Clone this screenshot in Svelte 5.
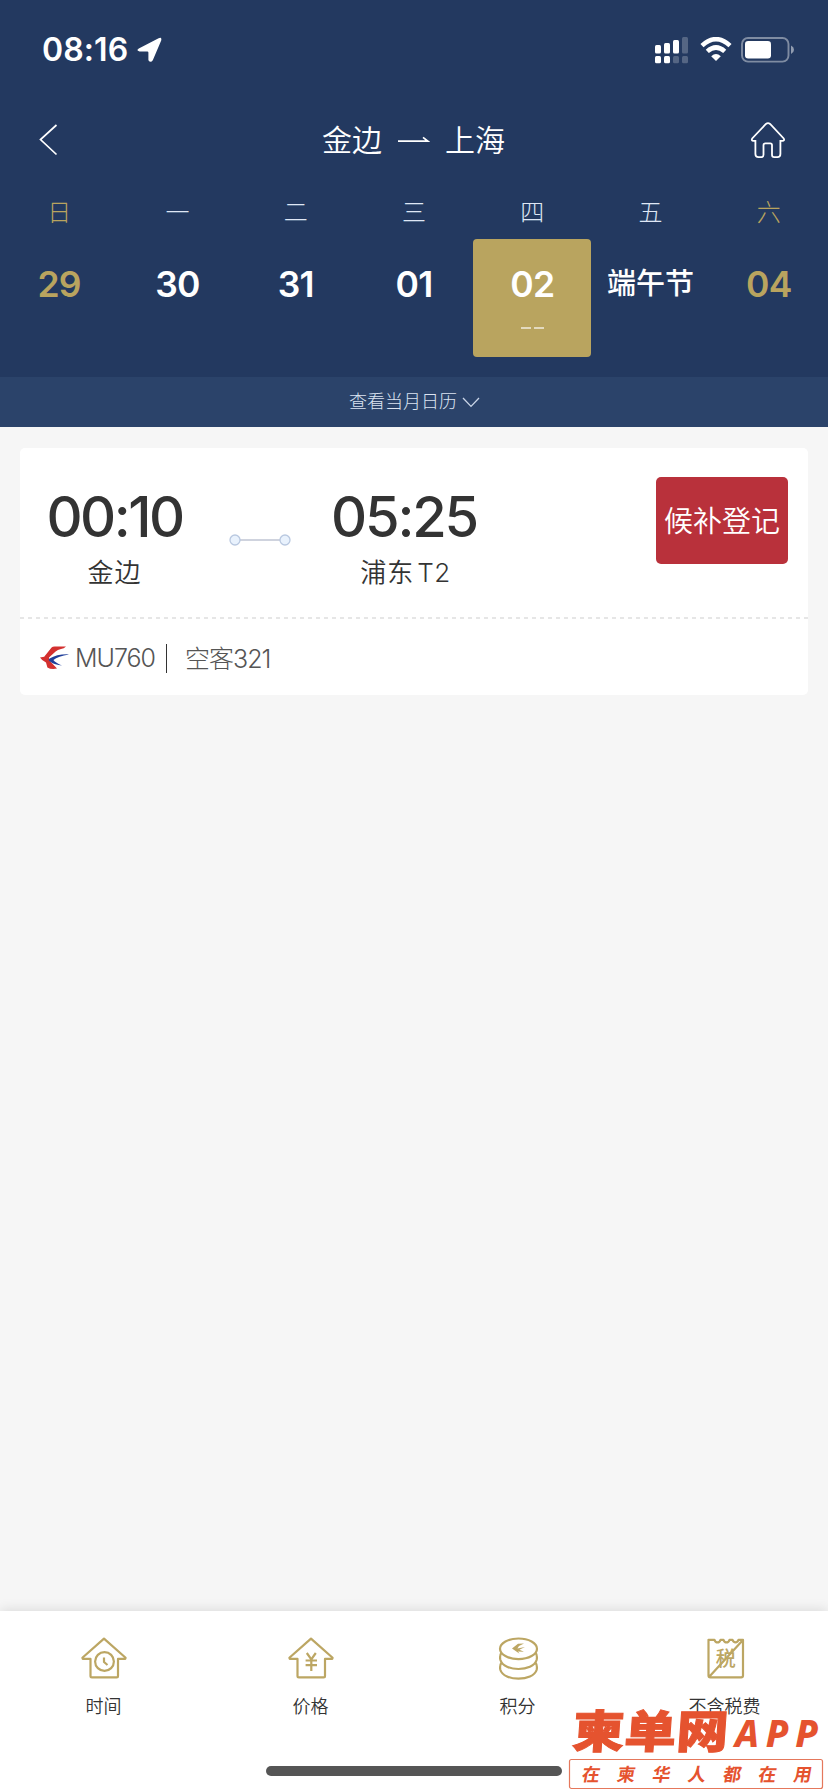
<script>
    let selected = 4;

    const days = [
        { week: "日", date: "29", weekend: true },
        { week: "一", date: "30" },
        { week: "二", date: "31" },
        { week: "三", date: "01" },
        { week: "四", date: "02" },
        { week: "五", date: "端午节", festival: true },
        { week: "六", date: "04", weekend: true }
    ];

    const tabs = [
        { icon: "time", label: "时间" },
        { icon: "price", label: "价格" },
        { icon: "points", label: "积分" },
        { icon: "tax", label: "不含税费" }
    ];
</script>

<div class="page">
    <header>
        <div class="status-bar">
            <span class="clock">08:16</span>
            <svg class="location" width="26" height="26" viewBox="0 0 26 26">
                <path d="M1.8 11.4 21.6 1.3Q25 -.2 24.2 3.4L15.8 23.2Q13.6 26.4 11.4 23.2V15.4Q11.3 14.4 10.4 14.4H2.6Q-1.4 13.6 1.8 11.4Z" fill="#fff" />
            </svg>
            <svg class="signal" width="34" height="28" viewBox="0 0 34 28" fill="#fff">
                <rect x="0" y="8" width="6" height="8.4" rx="1.5" />
                <rect x="9" y="6" width="6" height="10.4" rx="1.5" />
                <rect x="18" y="3" width="6" height="13.4" rx="1.5" />
                <rect x="27" y="0" width="6" height="16.4" rx="1.5" opacity=".23" />
                <rect x="0" y="19" width="6" height="7.2" rx="1.5" />
                <rect x="9" y="19" width="6" height="7.2" rx="1.5" />
                <rect x="18" y="19" width="6" height="7.2" rx="1.5" opacity=".23" />
                <rect x="27" y="19" width="6" height="7.2" rx="1.5" opacity=".23" />
            </svg>
            <svg class="wifi" width="32" height="24" viewBox="0 0 32 24">
                <path d="M2 8.6Q16-4.2 30 8.6M7.3 14.4Q16 6.6 24.7 14.4" fill="none" stroke="#fff" stroke-width="4.6" />
                <path d="M11.2 19.2Q16 15 20.8 19.2L16 24Z" fill="#fff" />
            </svg>
            <svg class="battery" width="54" height="26" viewBox="0 0 54 26">
                <rect x="1" y="1" width="46.5" height="23.6" rx="6" fill="none" stroke="#fff" stroke-opacity=".42" stroke-width="1.9" />
                <rect x="4" y="4" width="26" height="17.4" rx="3.2" fill="#fff" />
                <path d="M50 8.6Q53 10 53 12.8T50 17Z" fill="#fff" opacity=".5" />
            </svg>
        </div>

        <nav>
            <svg class="back" width="20" height="32" viewBox="0 0 20 32">
                <path d="M17.5 1 1.5 15.5 17.5 30.5" fill="none" stroke="#fff" stroke-width="1.7" />
            </svg>
            <h1>
                <span>金边</span>
                <svg width="32" height="8" viewBox="0 0 32 8">
                    <path d="M0 5.2H30L25 1.4" fill="none" stroke="#fff" stroke-width="1.7" />
                </svg>
                <span>上海</span>
            </h1>
            <svg class="home" width="36" height="37" viewBox="0 0 36 37">
                <path d="M15.9 2Q18 .4 20.1 2L33.5 16.2Q35.2 18.6 32.2 18.9H30.4V32Q30.4 35.2 27.4 35.2H24.2Q22 35.2 22 32.8V23Q22 21.4 20.3 21.4H15.4Q13.5 21.4 13.5 23V32.8Q13.5 35.2 11.3 35.2H8.6Q5.4 35.2 5.4 32V18.9H3.6Q.8 18.6 2.4 16.2Z" fill="none" stroke="#fff" stroke-width="1.8" />
            </svg>
        </nav>

        <div class="calendar">
            {#each days as day, i}
                <div class="day" class:weekend={day.weekend}>
                    <span class="week">{day.week}</span>
                    <button class="date" class:selected={i === selected} class:festival={day.festival}>
                        <span>{day.date}</span>
                        {#if i === selected}
                            <small><i></i><i></i></small>
                        {/if}
                    </button>
                </div>
            {/each}
        </div>

        <div class="month">
            <span>查看当月日历</span>
            <svg width="18" height="11" viewBox="0 0 18 11">
                <path d="M1 1 9 9.4 17 1" fill="none" stroke="#cbd6e8" stroke-width="1.3" />
            </svg>
        </div>
    </header>

    <main>
        <div class="card">
            <div class="flight">
                <div class="stop from">
                    <strong>00:10</strong>
                    <span>金边</span>
                </div>
                <svg class="route" width="62" height="12" viewBox="0 0 62 12">
                    <path d="M11 6H51" stroke="#cfd3de" stroke-width="2" />
                    <circle cx="6" cy="6" r="5" fill="#e9f2fd" stroke="#b9c8e0" stroke-width="1.3" />
                    <circle cx="56" cy="6" r="5" fill="#e9f2fd" stroke="#b9c8e0" stroke-width="1.3" />
                </svg>
                <div class="stop to">
                    <strong>05:25</strong>
                    <span>浦东<em>T2</em></span>
                </div>
                <button class="waitlist">候补登记</button>
            </div>
            <svg class="dashes" width="788" height="2" viewBox="0 0 788 2">
                <path d="M0 1H788" stroke="#dedede" stroke-width="1.6" stroke-dasharray="4 4" />
            </svg>
            <div class="plane">
                <svg width="30" height="24" viewBox="0 0 30 24">
                    <path d="M0 11.6 4.2 10.8 11.6 1.6Q12.6 .4 14.6 .4H26Q24 2.4 21 3 17.6 3.8 15.6 5.4L9 11.4Q8.6 13.6 10.8 16L17 22.6Q11 23.8 7.4 21.4L6 16.4Q2 15 0 11.6Z" fill="#d3302f" />
                    <path d="M29 8.4Q17 8 9.6 12.6 7.6 14 10 15.6 15 19.4 22 19.4 15.6 17 13.4 14 18 10.2 29 8.4Z" fill="#203f9a" />
                </svg>
                <span class="number">MU760</span>
                <span class="model">空客321</span>
            </div>
        </div>
    </main>

    <footer>
        <div class="tabs">
            {#each tabs as tab}
                <div class="tab">
                    <svg width="48" height="44" viewBox="0 0 48 44" fill="none" stroke="#bca663" stroke-width="2.2" stroke-linejoin="round">
                        {#if tab.icon === "time" || tab.icon === "price"}
                            <path d="M24 2.6 45.6 21.8 45.2 22.9H38V40Q38 41.4 36.6 41.4H11.9Q10.5 41.4 10.5 40V22.9H2.8L2.4 21.8Z" />
                        {/if}
                        {#if tab.icon === "time"}
                            <circle cx="24.5" cy="25.5" r="9.4" fill="#fff" />
                            <path d="M24 21.5V26L27.5 29" />
                        {:else if tab.icon === "price"}
                            <path d="M19.8 17 24.3 23.4 28.8 17M24.3 23V35M18.6 24.5H30M18.6 29.2H30" />
                        {:else if tab.icon === "points"}
                            <ellipse cx="24.5" cy="12.8" rx="18.5" ry="10.3" />
                            <path d="M7.3 17Q5.4 19.6 6.4 24C10 36 39 36 42.6 24Q43.6 19.6 41.7 17M7.3 27Q5.4 29.6 6.4 34C10 45.6 39 45.6 42.6 34Q43.6 29.6 41.7 27" />
                            <path d="M18 12.4 24 7.8 30 7.4 25 10 23.4 12.4 31 11 25.4 13.8 30 15.8 24 15.6 25.6 17.8Z" fill="#bca663" stroke="none" />
                        {:else}
                            <path d="M7.5 3.8V39.6Q7.5 41.4 9.3 41.4H40.2Q42 41.4 42 39.6V3.8H37.5Q36.8 6.4 34.5 6.4T31.5 3.8H28.5Q27.6 6.4 25.5 6.4T22.5 3.8H19.5Q18.6 6.4 16.5 6.4T13.5 3.8ZM8 41 41.5 4.4" />
                            <text x="24.8" y="29.8" text-anchor="middle" class="tax">税</text>
                        {/if}
                    </svg>
                    <span>{tab.label}</span>
                </div>
            {/each}
        </div>
        <div class="indicator"></div>
    </footer>

    <svg class="watermark" width="264" height="92" viewBox="0 0 264 92" fill="#e5532f">
        <g transform="translate(7.5 47.5) skewX(-4) scale(1.09 .95)">
            <text class="brand" x="0" y="0" textLength="143">柬单网</text>
        </g>
        <text class="app" x="171" y="46.5" textLength="83">APP</text>
        <rect x="5.5" y="59.5" width="253" height="29" rx="2" fill="#fff" stroke="#e5785c" stroke-width="1.2" />
        <g transform="translate(17 80.5) skewX(-10)">
            {#each "在柬华人都在用" as char, i}
                <text class="slogan" x={i * 35.3}>{char}</text>
            {/each}
        </g>
    </svg>
</div>

<style>
    :global(body) {
        margin: 0;
        background: #f6f6f6;
    }

    .page {
        position: relative;
        display: flex;
        flex-direction: column;
        width: 828px;
        height: 1792px;
        overflow: hidden;
        font-family: Inter, "Noto Sans CJK SC", sans-serif;
        color: #333;
        background: #f6f6f6;
    }

    svg {
        display: block;
        flex: none;
    }

    button {
        border: none;
        padding: 0;
        font-family: inherit;
        color: inherit;
        background: none;
    }

    header {
        height: 427px;
        color: #fff;
        background: #233960;
    }

    .status-bar {
        display: flex;
        height: 100px;
        box-sizing: border-box;
        padding: 37px 33px 0 42px;
    }

    .clock {
        width: 95px;
        line-height: 26px;
        font-size: 32px;
        font-weight: 600;
        letter-spacing: 0.1px;
    }

    .signal {
        margin-left: auto;
    }

    .wifi {
        margin-left: 11px;
    }

    .battery {
        margin-left: 9px;
    }

    nav {
        display: grid;
        grid-template-columns: 1fr auto 1fr;
        align-items: center;
        height: 80px;
        padding: 0 42px 0 39px;
    }

    .home {
        justify-self: end;
    }

    h1 {
        display: flex;
        align-items: center;
        margin: 0 0 0 2px;
        line-height: 40px;
        font-size: 30px;
        font-weight: 350;
    }

    h1 svg {
        margin: 0 15px 0 16px;
    }

    .calendar {
        display: grid;
        grid-template-columns: repeat(7, 1fr);
        height: 197px;
    }

    .day {
        display: flex;
        flex-direction: column;
        align-items: center;
    }

    .week {
        height: 59px;
        line-height: 65px;
        font-size: 24px;
        font-weight: 300;
        color: #dfe7f5;
    }

    .weekend,
    .weekend .week {
        color: #b9a45f;
    }

    .date {
        display: flex;
        flex-direction: column;
        align-items: center;
        width: 118px;
        height: 118px;
        line-height: 91px;
        font-size: 35.5px;
        font-weight: 600;
        letter-spacing: -0.8px;
        border-radius: 4px;
    }

    .selected {
        background: #b9a45f;
    }

    .festival {
        font-size: 29px;
        font-weight: 500;
        letter-spacing: 0;
        line-height: 90px;
    }

    .date small {
        display: flex;
        gap: 3px;
        margin-top: -3px;
    }

    .date i {
        width: 10px;
        height: 2px;
        background: #e3dabf;
    }

    .month {
        display: flex;
        justify-content: center;
        align-items: center;
        gap: 5px;
        height: 50px;
        padding-left: 1px;
        font-size: 18px;
        line-height: 48px;
        font-weight: 300;
        color: #dbe4f2;
        background: #2b436a;
    }

    main {
        flex: 1;
        padding: 20px;
    }

    .card {
        margin-top: 1px;
        height: 247px;
        border-radius: 5px;
        background: #fff;
    }

    .flight {
        display: flex;
        height: 169px;
        box-sizing: border-box;
        padding: 29px 20px 0 17px;
    }

    .stop {
        display: flex;
        flex-direction: column;
        align-items: center;
        width: 155px;
    }

    .stop strong {
        line-height: 80px;
        font-size: 56px;
        font-weight: 500;
        letter-spacing: -2.5px;
    }

    .stop span {
        line-height: 32px;
        font-size: 26px;
        font-weight: 350;
        letter-spacing: 1px;
    }

    .stop em {
        margin-left: 3px;
        font-style: normal;
        letter-spacing: 0.6px;
    }

    .route {
        margin: 57px 37px 0 37px;
    }

    .to strong {
        margin-left: -3px;
        letter-spacing: -2.2px;
    }

    .waitlist {
        width: 132px;
        height: 87px;
        margin-left: auto;
        padding-bottom: 4px;
        font-size: 29px;
        font-weight: 350;
        color: #fff;
        background: #b9313b;
        border-radius: 5px;
    }

    .plane {
        display: flex;
        align-items: center;
        height: 78px;
        padding-left: 20px;
        font-size: 25px;
        font-weight: 300;
        letter-spacing: -1px;
        color: #555;
    }

    .number {
        width: 91px;
        margin-left: 5px;
        line-height: 29px;
        border-right: 1px solid #333;
    }

    .model {
        margin: -3px 0 0 18px;
    }

    footer {
        height: 181px;
        background: #fff;
        box-shadow: 0 -1px 12px rgba(0, 0, 0, 0.12);
    }

    .tabs {
        display: grid;
        grid-template-columns: repeat(4, 1fr);
        height: 155px;
    }

    .tab {
        display: flex;
        flex-direction: column;
        align-items: center;
        padding-top: 25px;
    }

    .tab span {
        margin-top: 14px;
        line-height: 26px;
        font-size: 18px;
        font-weight: 350;
    }

    .tax {
        font-size: 20px;
        font-weight: 500;
        fill: #bca663;
        stroke: none;
    }

    .indicator {
        width: 296px;
        height: 10px;
        margin: 0 auto;
        border-radius: 5px;
        background: #555;
    }

    /* floats over the tab bar */
    .watermark {
        position: absolute;
        right: 0;
        bottom: 0;
    }

    .brand {
        font-size: 47.5px;
        font-weight: 900;
        stroke: #e5532f;
        stroke-width: 1px;
    }

    .app {
        font-family: "Noto Sans", sans-serif;
        font-size: 37px;
        font-weight: 800;
        font-style: italic;
    }

    .slogan {
        font-size: 18px;
        font-weight: 700;
    }
</style>
